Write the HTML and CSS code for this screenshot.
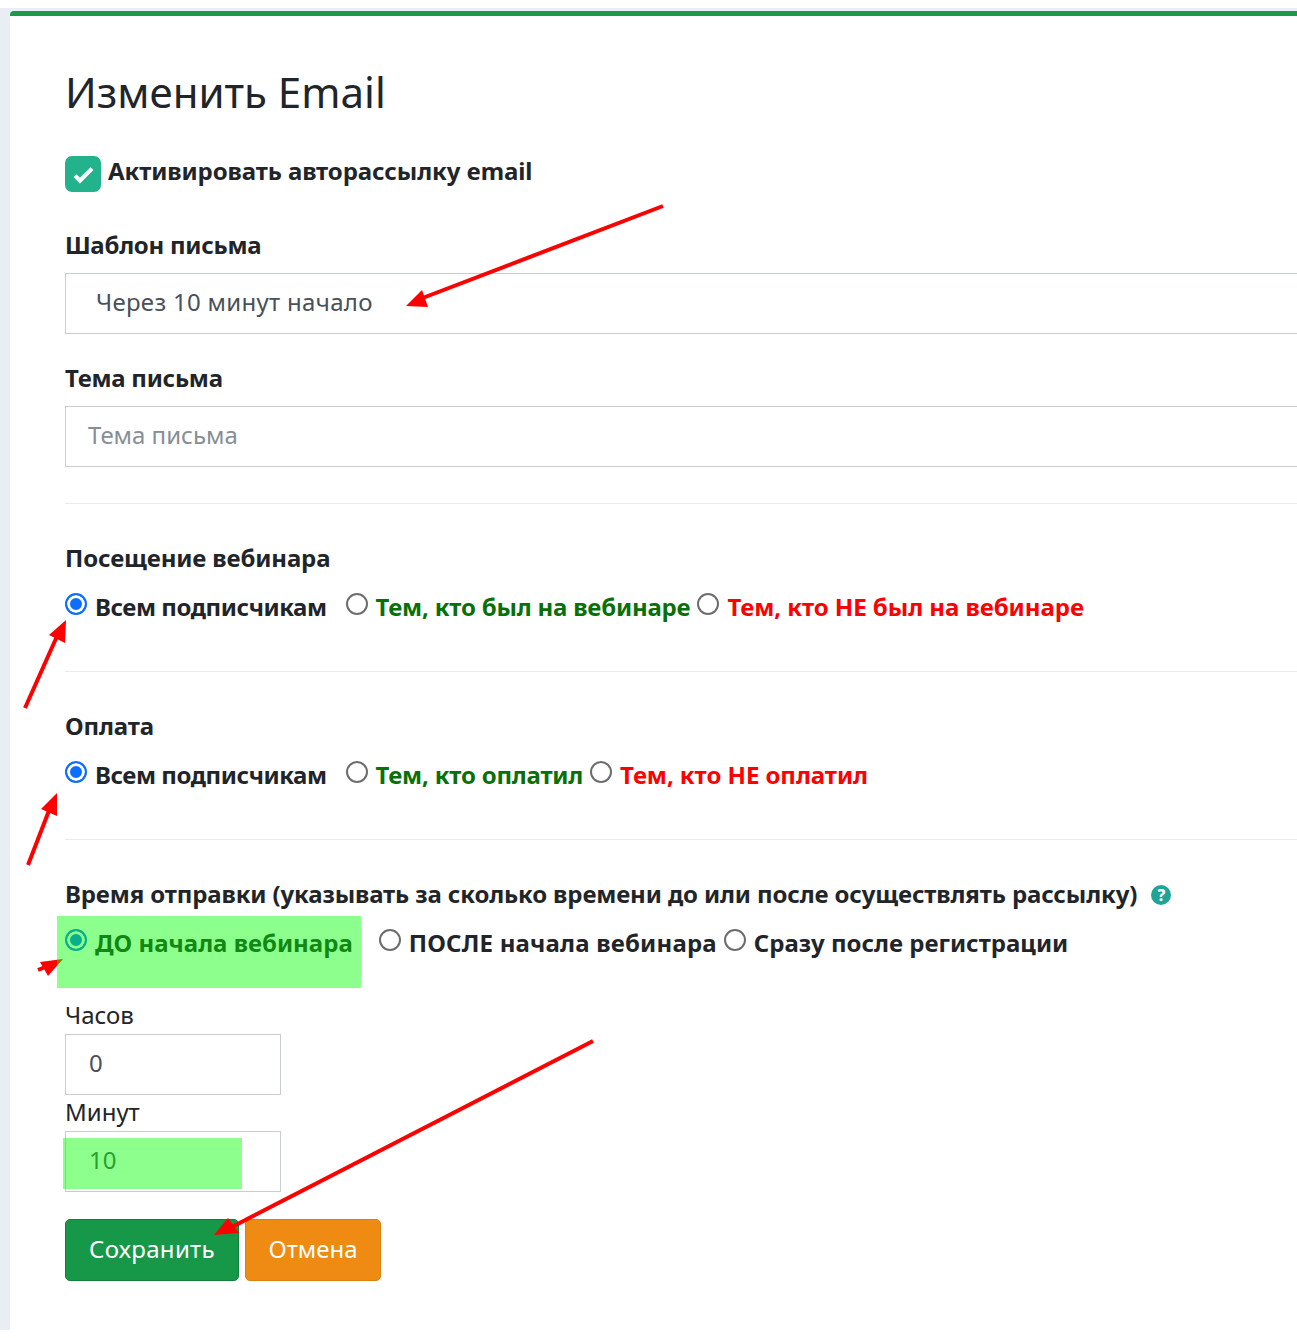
FILE: index.html
```html
<!DOCTYPE html>
<html lang="ru">
<head>
    <meta charset="UTF-8">
    <title>Изменить Email</title>
    <link rel="stylesheet" href="styles.css">
</head>
<body>
    <div class="page">
        <div class="card">
            <h1>Изменить Email</h1>

            <label class="check-row">
                <input type="checkbox" class="check" checked>
                <span>Активировать авторассылку email</span>
            </label>

            <label class="field-label first">Шаблон письма</label>
            <select class="control select">
                <option>Через 10 минут начало</option>
            </select>

            <label class="field-label">Тема письма</label>
            <input type="text" class="control" placeholder="Тема письма">

            <hr>

            <div class="field-label section">Посещение вебинара</div>
            <div class="radios">
                <label class="radio-item lead"><input type="radio" name="visit" checked><span>Всем подписчикам</span></label>
                <label class="radio-item"><input type="radio" name="visit"><span class="yes">Тем, кто был на вебинаре</span></label>
                <label class="radio-item"><input type="radio" name="visit"><span class="no">Тем, кто НЕ был на вебинаре</span></label>
            </div>

            <hr>

            <div class="field-label section">Оплата</div>
            <div class="radios">
                <label class="radio-item lead"><input type="radio" name="pay" checked><span>Всем подписчикам</span></label>
                <label class="radio-item"><input type="radio" name="pay"><span class="yes">Тем, кто оплатил</span></label>
                <label class="radio-item"><input type="radio" name="pay"><span class="no">Тем, кто НЕ оплатил</span></label>
            </div>

            <hr>

            <div class="field-label section">Время отправки (указывать за сколько времени до или после осуществлять рассылку) <span class="help">?</span></div>
            <div class="radios time">
                <label class="radio-item before"><input type="radio" name="time" checked><span>ДО начала вебинара</span></label>
                <label class="radio-item after"><input type="radio" name="time"><span>ПОСЛЕ начала вебинара</span></label>
                <label class="radio-item last"><input type="radio" name="time"><span>Сразу после регистрации</span></label>
            </div>

            <div class="small-label">Часов</div>
            <input type="text" class="control small" value="0">
            <div class="small-label">Минут</div>
            <input type="text" class="control small" value="10">

            <div class="buttons">
                <button class="btn save">Сохранить</button>
                <button class="btn cancel">Отмена</button>
            </div>
        </div>
    </div>

    <!-- arrows and marker highlights drawn over the screenshot -->
    <svg class="arrows" width="1297" height="1338" viewBox="0 0 1297 1338">
        <g stroke="#fe0000" stroke-width="4">
            <line x1="663" y1="206" x2="420" y2="299"/>
            <line x1="25" y1="708" x2="58" y2="634"/>
            <line x1="28" y1="865" x2="50" y2="808"/>
            <line x1="38" y1="970" x2="50" y2="965"/>
            <line x1="593" y1="1041" x2="228" y2="1229"/>
        </g>
        <g fill="#fe0000">
            <polygon points="406,306 422,290 428,307"/>
            <polygon points="66,620 49,635 65,643"/>
            <polygon points="57,793 41,809 57,816"/>
            <polygon points="63,959 40,962 48,976"/>
            <polygon points="214,1235 228,1218 239,1233"/>
        </g>
    </svg>
    <div class="marker marker-time"></div>
    <div class="marker marker-minutes"></div>
</body>
</html>
```

FILE: styles.css
```css
* {
    box-sizing: border-box;
}

html, body {
    margin: 0;
    overflow: hidden;
}

body {
    position: relative;
    height: 1338px;
    background-color: #fff;
    font-family: "Noto Sans", Arial, sans-serif;
    font-size: 24px;
    line-height: 36px;
    color: #212529;
}

.page {
    height: 1322px;
    margin-top: 8px;
    padding: 3px 0 0 10px;
    background-color: #e9edf4;
}

.card {
    height: 100%;
    width: 1400px;
    padding: 51px 0 0 55px;
    background-color: #fff;
    border-top: 5px solid #1a9a4b;
    border-top-left-radius: 4px;
}

h1 {
    margin: 0 0 39px;
    font-size: 42px;
    font-weight: 400;
    line-height: 50px;
}

.check-row {
    display: flex;
    align-items: flex-start;
    gap: 7px;
    height: 36px;
    font-weight: 700;
    line-height: 30px;
    letter-spacing: -0.1px;
}

.check {
    appearance: none;
    position: relative;
    width: 36px;
    height: 36px;
    margin: 0;
    border-radius: 7px;
    background-color: #22b38d;
}

.check::after {
    content: "";
    box-sizing: border-box;
    position: absolute;
    left: 9px;
    top: 13px;
    width: 19px;
    height: 9px;
    border-left: 4px solid #fff;
    border-bottom: 4px solid #fff;
    transform: rotate(-45deg);
}

.field-label {
    display: block;
    margin: 27px 0 11px;
    font-weight: 700;
    line-height: 34px;
    letter-spacing: -0.25px;
}

.field-label.first {
    margin-top: 36px;
}

.field-label.section {
    margin: 37px 0 14px;
    letter-spacing: -0.13px;
}

.control {
    display: block;
    width: 100%;
    height: 61px;
    padding: 0 22px 4px;
    border: 1px solid #c9cbd9;
    border-radius: 0;
    background-color: #fff;
    font: inherit;
    color: #495057;
}

.control::placeholder {
    color: #868e96;
}

.select {
    appearance: none;
    padding-left: 30px;
    letter-spacing: 0.3px;
}

hr {
    height: 1px;
    margin: 36px 0 0;
    border: 0;
    background-color: #e9ecef;
}

.radios {
    display: flex;
    gap: 7px;
    height: 46px;
    font-weight: 700;
    letter-spacing: -0.12px;
}

.radios.time {
    height: 73px;
}

.radio-item {
    display: flex;
    align-items: flex-start;
}

.radio-item.lead {
    margin-right: 12px;
    letter-spacing: -0.44px;
}

.radio-item.before {
    margin-right: 19px;
    letter-spacing: 0;
}

.radio-item.after {
    letter-spacing: 0.2px;
}

.radio-item.last {
    letter-spacing: 0;
}

.radio-item input {
    appearance: none;
    flex: none;
    width: 22px;
    height: 22px;
    margin: 4px 8px 0 0;
    border: 2px solid #6d6d6d;
    border-radius: 50%;
    background-color: #fff;
}

.radio-item input:checked {
    border-color: #0d6efd;
    background-color: #0d6efd;
    box-shadow: inset 0 0 0 3px #fff;
}

.yes {
    color: #087008;
    letter-spacing: -0.2px;
}

.no {
    color: #fe0000;
    letter-spacing: -0.05px;
}

.help {
    display: inline-block;
    width: 20px;
    height: 20px;
    margin-left: 8px;
    border-radius: 50%;
    background-color: #1fa598;
    color: #fff;
    font-size: 16px;
    font-weight: 800;
    line-height: 20px;
    text-align: center;
    vertical-align: 2px;
}

.small-label {
    height: 36px;
    line-height: 34px;
}

.control.small {
    width: 216px;
    padding-left: 23px;
}

.buttons {
    display: flex;
    gap: 6px;
    margin-top: 27px;
}

.btn {
    height: 62px;
    padding: 0 0 2px;
    border: 1px solid;
    border-radius: 5px;
    font: inherit;
    color: #fff;
}

.save {
    width: 174px;
    background-color: #179848;
    border-color: #127e3b;
    letter-spacing: 0.3px;
}

.cancel {
    width: 136px;
    background-color: #ef8b12;
    border-color: #dd8010;
}

.marker {
    position: absolute;
    background-color: rgba(0, 255, 0, 0.45);
}

.marker-time {
    left: 57px;
    top: 916px;
    width: 304px;
    height: 72px;
}

.marker-minutes {
    left: 63px;
    top: 1138px;
    width: 179px;
    height: 51px;
}

.arrows {
    position: absolute;
    left: 0;
    top: 0;
    pointer-events: none;
}
```
